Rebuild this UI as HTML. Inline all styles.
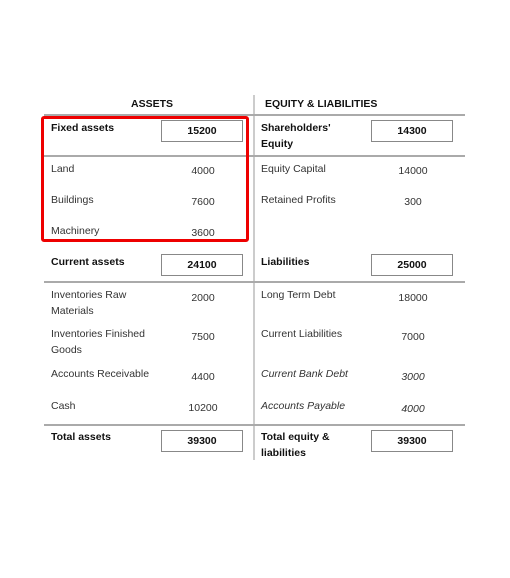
<!DOCTYPE html>
<html><head><style>
body{margin:0;width:510px;height:578px;background:#fff;position:relative;font-family:"Liberation Sans",sans-serif;font-size:10.5px;color:#333;overflow:hidden}
.a{position:absolute;white-space:nowrap;line-height:16px}
.b{font-weight:bold;color:#111}
.n{position:absolute;width:60px;text-align:center;line-height:15px}
.box{position:absolute;width:80px;height:20px;border:1.5px solid #888;text-align:center;line-height:20px;font-weight:bold;color:#111;box-sizing:content-box}
.h{position:absolute;height:2px;background:#aaa}
i{font-style:italic}
</style></head><body>
<div class="a b" style="left:131px;top:96px">ASSETS</div>
<div class="a b" style="left:265px;top:96px">EQUITY &amp; LIABILITIES</div>
<div style="position:absolute;left:253px;top:95px;width:2px;height:365px;background:#ccc"></div>
<div class="h" style="left:44px;top:114px;width:421px"></div>
<div class="h" style="left:44px;top:155px;width:421px"></div>
<div class="h" style="left:44px;top:281px;width:421px"></div>
<div class="h" style="left:44px;top:424px;width:421px"></div>
<div style="position:absolute;left:41px;top:116px;width:202px;height:120px;border:3px solid #e00;border-radius:3px"></div>

<div class="a b" style="left:51px;top:120px">Fixed assets</div>
<div class="box" style="left:161px;top:120px">15200</div>
<div class="a" style="left:51px;top:161px">Land</div><div class="n" style="left:173px;top:164px">4000</div>
<div class="a" style="left:51px;top:192px">Buildings</div><div class="n" style="left:173px;top:195px">7600</div>
<div class="a" style="left:51px;top:223px">Machinery</div><div class="n" style="left:173px;top:226px">3600</div>
<div class="a b" style="left:51px;top:254px">Current assets</div>
<div class="box" style="left:161px;top:254px">24100</div>
<div class="a" style="left:51px;top:287px">Inventories Raw<br>Materials</div><div class="n" style="left:173px;top:291px">2000</div>
<div class="a" style="left:51px;top:326px">Inventories Finished<br>Goods</div><div class="n" style="left:173px;top:330px">7500</div>
<div class="a" style="left:51px;top:366px">Accounts Receivable</div><div class="n" style="left:173px;top:370px">4400</div>
<div class="a" style="left:51px;top:398px">Cash</div><div class="n" style="left:173px;top:401px">10200</div>
<div class="a b" style="left:51px;top:429px">Total assets</div>
<div class="box" style="left:161px;top:430px">39300</div>

<div class="a b" style="left:261px;top:120px">Shareholders'<br>Equity</div>
<div class="box" style="left:371px;top:120px">14300</div>
<div class="a" style="left:261px;top:161px">Equity Capital</div><div class="n" style="left:383px;top:164px">14000</div>
<div class="a" style="left:261px;top:192px">Retained Profits</div><div class="n" style="left:383px;top:195px">300</div>
<div class="a b" style="left:261px;top:254px">Liabilities</div>
<div class="box" style="left:371px;top:254px">25000</div>
<div class="a" style="left:261px;top:287px">Long Term Debt</div><div class="n" style="left:383px;top:291px">18000</div>
<div class="a" style="left:261px;top:326px">Current Liabilities</div><div class="n" style="left:383px;top:330px">7000</div>
<div class="a" style="left:261px;top:366px"><i>Current Bank Debt</i></div><div class="n" style="left:383px;top:370px"><i>3000</i></div>
<div class="a" style="left:261px;top:398px"><i>Accounts Payable</i></div><div class="n" style="left:383px;top:402px"><i>4000</i></div>
<div class="a b" style="left:261px;top:429px">Total equity &amp;<br>liabilities</div>
<div class="box" style="left:371px;top:430px">39300</div>
</body></html>
